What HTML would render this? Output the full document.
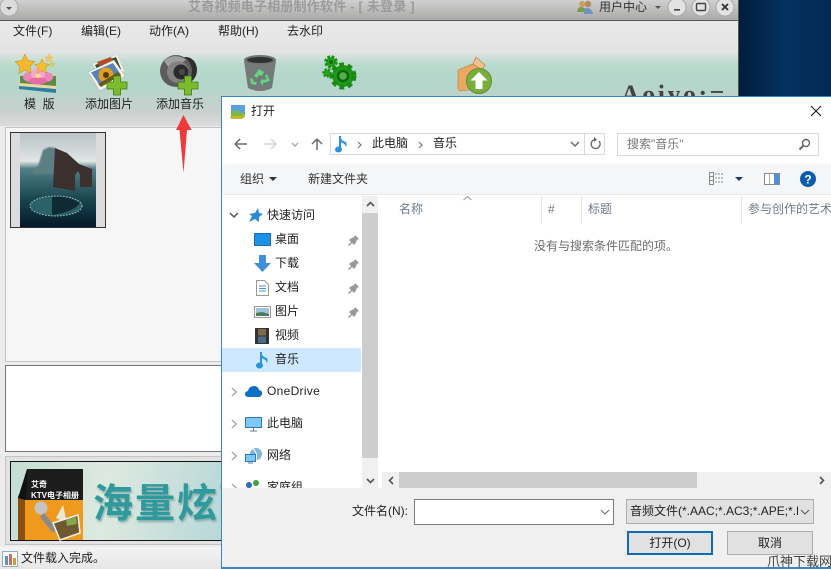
<!DOCTYPE html>
<html><head><meta charset="utf-8">
<style>
html,body{margin:0;padding:0}
body{width:831px;height:569px;position:relative;overflow:hidden;background:#03274f;font-family:"Liberation Sans","Noto Sans CJK SC",sans-serif;font-size:12px;color:#222}
.a{position:absolute;white-space:nowrap}
svg{position:absolute;overflow:visible}
</style></head><body>
<div class="a" style="left:739px;top:0;width:92px;height:97px;background:linear-gradient(90deg,#021d3e,#04315f 50%,#032a55)"></div>
<!-- app window -->
<div class="a" style="left:0;top:0;width:738px;height:569px;background:#ececec"></div>
<div class="a" style="left:738px;top:0;width:1px;height:97px;background:#555"></div>
<div class="a" style="left:0;top:0;width:738px;height:20px;background:linear-gradient(#d0d0d0,#a9a9a7)"></div>
<div class="a" style="left:0;top:20px;width:738px;height:1px;background:#555"></div>
<div class="a" style="left:0;top:21px;width:738px;height:105px;background:linear-gradient(#e9e9e9 0,#e4e4e4 30px,#b8dacd 44px,#b4d6ca 64px,#c8d0cc 90px,#dcdcdc 105px)"></div>
<div class="a" style="left:188px;top:-3px;font-size:13px;font-weight:bold;color:#9b9b9b;line-height:20px;letter-spacing:.2px">艾奇视频电子相册制作软件 - [ 未登录 ]</div>
<svg style="left:0;top:0" width="20" height="20"><circle cx="9" cy="7" r="9" fill="#dcdcdc" stroke="#aaa"/><path d="M6 7h6l-3 3z" fill="#555"/></svg>
<svg style="left:577px;top:0" width="18" height="14"><circle cx="5" cy="4" r="3" fill="#c9a15c"/><path d="M0 12q1-6 5-5t5 5z" fill="#7a9a50"/><circle cx="11" cy="4" r="3.200" fill="#b98a5a"/><path d="M7 14q0-7 4-6t5 6z" fill="#6d93c9"/></svg>
<div class="a" style="left:599px;top:-1px;font-size:12px;line-height:16px;color:#333">用户中心</div>
<svg style="left:654px;top:5px" width="8" height="5"><path d="M1 1h6l-3 3z" fill="#555"/></svg>
<svg style="left:667px;top:0" width="71" height="18">
<circle cx="10" cy="7" r="9" fill="#e2e2e2" stroke="#aaa"/><rect x="7" y="9" width="6" height="1.600" fill="#444"/>
<circle cx="34" cy="7" r="9" fill="#e2e2e2" stroke="#aaa"/><rect x="29.500" y="3.500" width="9" height="7" rx="1" fill="none" stroke="#444" stroke-width="1.400"/>
<circle cx="58" cy="7" r="9" fill="#e2e2e2" stroke="#aaa"/><path d="M55 4l6 6M61 4l-6 6" stroke="#333" stroke-width="1.800"/></svg>
<div class="a" style="left:13px;top:23px;line-height:17px">文件(F)</div>
<div class="a" style="left:81px;top:23px;line-height:17px">编辑(E)</div>
<div class="a" style="left:149px;top:23px;line-height:17px">动作(A)</div>
<div class="a" style="left:218px;top:23px;line-height:17px">帮助(H)</div>
<div class="a" style="left:287px;top:23px;line-height:17px">去水印</div>
<!-- toolbar icons -->
<svg style="left:16px;top:52px" width="42" height="44">
<path d="M3 32l37 5v4L3 37z" fill="#2f7fa0"/><path d="M3 28l37 3v6l-37-3z" fill="#e8d9a0"/><path d="M4 24h36v10L4 31z" fill="#5f8a45"/>
<ellipse cx="14" cy="25" rx="7" ry="5" fill="#ef86b8"/><ellipse cx="30" cy="25" rx="7" ry="5" fill="#ef86b8"/><ellipse cx="22" cy="22" rx="7" ry="6" fill="#f7a6cc"/><ellipse cx="22" cy="29" rx="9" ry="3.500" fill="#e86aa8"/><ellipse cx="22" cy="24" rx="3" ry="2" fill="#f7e27a"/>
<path d="M9 2l3 6.500 7 1-5 5 1.200 7L9 18l-6.200 3.500 1.200-7-5-5 7-1z" fill="#f3b82e" stroke="#c98a10" stroke-width=".5"/>
<path d="M26 7l2.200 4.600 5 .8-3.600 3.500.8 5L26 18.500 21.600 21l.8-5-3.600-3.500 5-.8z" fill="#f2bf36" stroke="#c98a10" stroke-width=".5"/>
<path d="M33 1l1.600 3.300 3.600.5-2.600 2.500.6 3.600L33 9.200l-3.200 1.700.6-3.600-2.600-2.500 3.600-.5z" fill="#e6c873"/>
<path d="M36 9l1 2 2.300.3-1.700 1.600.4 2.300L36 14.100l-2 1.100.4-2.300-1.700-1.600 2.300-.3z" fill="#d9c765"/></svg>
<svg style="left:87px;top:54px" width="42" height="40">
<path d="M6 10L30 1l7 16-23 9z" fill="#f2f2ea"/><path d="M8 11L29 3l5 12-20 8z" fill="#3a4a2a"/><path d="M10 8l14-5 2 4-14 5z" fill="#b84a2a"/>
<path d="M1 18L27 6l11 16-25 15z" fill="#f6f6ef" stroke="#aaa" stroke-width=".5"/><path d="M4 18.500L26 9l8 12-20 12z" fill="#5a82b8"/><circle cx="19" cy="21" r="7.500" fill="#e0a01e"/><circle cx="19" cy="21" r="3" fill="#5a3a10"/><path d="M11 30l20-12 3 3-20 12z" fill="#6a5a20"/>
<path d="M26.500 22h7v6h6.500v7h-6.500v6h-7v-6H20v-7h6.500z" fill="#7dbb2c" stroke="#3d7a14" stroke-width=".8"/></svg>
<svg style="left:158px;top:53px" width="42" height="42">
<ellipse cx="28" cy="17" rx="11" ry="13" fill="#2e2e2e"/><circle cx="18" cy="18" r="16" fill="#5c5c5c"/><path d="M6 8a16 16 0 0 1 22-1L20 12a8 8 0 0 0-9 3z" fill="#a0a0a0"/><circle cx="20" cy="19" r="11" fill="#828282"/><circle cx="23" cy="19" r="7.500" fill="#2a2a2a"/><circle cx="24" cy="19" r="3" fill="#4a4a4a"/>
<path d="M26.500 23h7v6h6.500v7h-6.500v6h-7v-6H20v-7h6.500z" fill="#7dbb2c" stroke="#3d7a14" stroke-width=".8"/></svg>
<svg style="left:243px;top:55px" width="34" height="38">
<ellipse cx="17" cy="5" rx="16" ry="5" fill="#6f7472"/><path d="M1 6l4 27q12 6 24 0l4-27q-16 7-32 0z" fill="#74797a"/><ellipse cx="17" cy="5" rx="13" ry="3" fill="#2f3233"/>
<path d="M11 21l5-7 5 3-2 4-3-1-2 3zM24 19l3 7-7 2v3l-3-4 3-4v2l4-1-2-3zM13 30l-5-1-1-5 2-1 2 4 3 0z" fill="#63d581"/></svg>
<svg style="left:322px;top:55px" width="40" height="38">
<circle cx="9" cy="7" r="5" fill="#2aa51c" stroke="#149014" stroke-dasharray="2.500 1.500" stroke-width="3.500"/><circle cx="9" cy="7" r="2.200" fill="#0d730d"/>
<circle cx="5" cy="18" r="3.500" fill="#2aa51c" stroke="#149014" stroke-dasharray="2 1.500" stroke-width="2.500"/>
<circle cx="21" cy="21" r="11" fill="#1e9a18" stroke="#1a8a16" stroke-dasharray="4.500 3.500" stroke-width="5"/><circle cx="21" cy="21" r="5" fill="#58ad4c" stroke="#0b6a0b" stroke-width="2.500"/></svg>
<svg style="left:457px;top:56px" width="38" height="38">
<path d="M1 14l15-6 5 3v22l-18 2q-2-1-2-3z" fill="#eaa862" stroke="#b57a3a" stroke-width=".6"/><path d="M16 8l3-7 9 8-3 5z" fill="#f2c08a" stroke="#b57a3a" stroke-width=".6"/>
<circle cx="22" cy="25" r="12.500" fill="#7aae3c" stroke="#5f8f30"/><path d="M22 16l8.500 8.500H25.500V33h-7v-8.500h-5z" fill="#fff"/></svg>
<div class="a" style="left:24px;top:97px;line-height:15px">模&nbsp;&nbsp;版</div>
<div class="a" style="left:85px;top:97px;line-height:15px">添加图片</div>
<div class="a" style="left:156px;top:97px;line-height:15px">添加音乐</div>
<div class="a" style="left:621px;top:80px;font-family:'Liberation Serif',serif;font-size:26px;font-weight:bold;line-height:30px;color:#444;letter-spacing:2.500px">Aoiyo:=</div>
<!-- panels -->
<div class="a" style="left:5px;top:127px;width:225px;height:235px;background:#f6f6f7;border:1px solid #c4c4c4;box-sizing:border-box"></div>
<div class="a" style="left:10px;top:132px;width:96px;height:96px;background:#dcdcdf;border:1px solid #333;box-sizing:border-box"></div>
<svg style="left:20px;top:133px;overflow:hidden" width="76" height="94" viewBox="0 0 76 94">
<defs><linearGradient id="g" x1="0" y1="0" x2="0" y2="1"><stop offset="0" stop-color="#b9c2c6"/><stop offset=".3" stop-color="#e1e6e6"/><stop offset=".38" stop-color="#4f7f86"/><stop offset=".7" stop-color="#1a4650"/><stop offset="1" stop-color="#05182a"/></linearGradient><filter id="b"><feGaussianBlur stdDeviation=".7"/></filter></defs>
<rect width="76" height="94" fill="url(#g)"/>
<path d="M11 37l7-4 5-16 6-3 7 1v26H14z" fill="#5d7f82" filter="url(#b)"/>
<path d="M35 15l12 5 12 11 13 5v18H60V42l-2-4-3 4v16l-22-4z" fill="#3b302d"/>
<ellipse cx="36" cy="73" rx="26" ry="10" fill="#2b6169" stroke="#a7c2c5" stroke-dasharray="1.500 1.500"/><path d="M32 64q16-2 28 6-6 9-28 12z" fill="#0f2a33"/></svg>
<!-- arrow -->
<svg style="left:176px;top:115px" width="16" height="60"><path d="M7.500 0L15.500 15H11L7.500 58 3.500 15H0z" fill="#f03a3a"/></svg>
<div class="a" style="left:5px;top:365px;width:225px;height:87px;background:#fff;border:1px solid #777;box-sizing:border-box"></div>
<div class="a" style="left:5px;top:456px;width:225px;height:89px;background:#e2e2e2;border:1px solid #c4c4c4;box-sizing:border-box"></div>
<div class="a" style="left:10px;top:461px;width:212px;height:80px;background:linear-gradient(100deg,#c4ddd2,#dde9e0 45%,#b8d8d8);border:1px solid #111;box-sizing:border-box;overflow:hidden">
<div class="a" style="left:82px;top:14px;font-size:40px;line-height:56px;font-weight:bold;color:#2f9a9c;letter-spacing:2px;text-shadow:1px 2px 2px #8aa">海量炫酷</div></div>
<svg style="left:18px;top:466px" width="66" height="74">
<path d="M9 3h56v34H0z" fill="#1c1c1c"/><path d="M7 34h58v40H7z" fill="#ef9a1f"/><path d="M0 30l7-10v54H0z" fill="#8a4f10"/><path d="M0 32L9 3v20L7 34z" fill="#111"/>
<path d="M38 52l7-13 4 18z" fill="#e9e9d8"/>
<circle cx="23" cy="42" r="6.500" fill="#c4c4c4"/><path d="M26 47l13 16-4 4-13-16z" fill="#8a8a8a"/><path d="M35 57l25-8 2 18-20 7z" fill="#6f5a30" stroke="#f2f2f2" stroke-width="1.500"/><path d="M48 54l10-3 1 7-10 2z" fill="#86a84a"/></svg>
<div class="a" style="left:31px;top:479px;font-size:8px;line-height:11px;font-weight:bold;color:#fff">艾奇<br>KTV电子相册</div>
<div class="a" style="left:0;top:547px;width:221px;height:22px;background:linear-gradient(#f4f4f4,#e6e6e6)"></div>
<svg style="left:2px;top:551px" width="16" height="16"><rect x=".5" y=".5" width="15" height="15" fill="#fff" stroke="#9ab"/><rect x="3" y="5" width="3" height="9" fill="#5a8fd0"/><rect x="7" y="3" width="3" height="11" fill="#d06a5a"/><rect x="11" y="7" width="3" height="7" fill="#c9a040"/></svg>
<div class="a" style="left:21px;top:550px;font-size:12px;line-height:17px">文件载入完成。</div>
<!-- dialog -->
<div class="a" style="left:221px;top:96px;width:610px;height:473px;background:#fff;border:1px solid #3a86c4;border-right:0;box-sizing:border-box"></div>
<svg style="left:230px;top:104px" width="16" height="16"><rect x="1" y="1" width="14" height="11" fill="#5aa0dc"/><path d="M1 8l5-2 9 4v2H1z" fill="#7fb84a"/><path d="M0 12h12l3-2v3l-3 2H1z" fill="#c9b52e"/></svg>
<div class="a" style="left:251px;top:103px;line-height:17px;color:#222">打开</div>
<svg style="left:810px;top:105px" width="12" height="12"><path d="M1 1l10 10M11 1L1 11" stroke="#111" stroke-width="1"/></svg>
<!-- nav -->
<svg style="left:234px;top:137px" width="100" height="14"><path d="M1 7h12M1 7l5-5M1 7l5 5" stroke="#6b6b6b" stroke-width="1.500" fill="none"/><path d="M30 7h12M42 7l-5-5M42 7l-5 5" stroke="#d5d5d5" stroke-width="1.500" fill="none"/><path d="M58 6l3 3 3-3" stroke="#999" stroke-width="1.200" fill="none"/><path d="M83 13V2M83 2l-5 5M83 2l5 5" stroke="#6b6b6b" stroke-width="1.500" fill="none"/></svg>
<div class="a" style="left:330px;top:133px;width:275px;height:22px;border:1px solid #d9d9d9;box-sizing:border-box"></div>
<div class="a" style="left:584px;top:133px;width:1px;height:22px;background:#d9d9d9"></div>
<svg style="left:335px;top:135px" width="14" height="19"><path d="M5 1v13" stroke="#2a93dc" stroke-width="2"/><ellipse cx="3.500" cy="14.500" rx="3.500" ry="3" fill="#2a93dc"/><path d="M5 1q1 5 6 6 1 2 0 5-1-4-6-5z" fill="#2a93dc"/></svg>
<svg style="left:357px;top:141px" width="5" height="8"><path d="M1 1l3 3-3 3" stroke="#777" fill="none" stroke-width="1.200"/></svg>
<div class="a" style="left:372px;top:135px;line-height:17px;color:#222">此电脑</div>
<svg style="left:418px;top:141px" width="5" height="8"><path d="M1 1l3 3-3 3" stroke="#777" fill="none" stroke-width="1.200"/></svg>
<div class="a" style="left:433px;top:135px;line-height:17px;color:#222">音乐</div>
<svg style="left:570px;top:141px" width="10" height="7"><path d="M1 1l4 4 4-4" stroke="#666" fill="none" stroke-width="1.400"/></svg>
<svg style="left:589px;top:137px" width="13" height="14"><path d="M10 4a4.500 4.500 0 1 1-3-1.500" stroke="#666" fill="none" stroke-width="1.300"/><path d="M5 0l3 2.500-3 2.500z" fill="#666"/></svg>
<div class="a" style="left:617px;top:133px;width:202px;height:23px;border:1px solid #d9d9d9;box-sizing:border-box"></div>
<div class="a" style="left:627px;top:136px;line-height:17px;color:#777">搜索"音乐"</div>
<svg style="left:798px;top:138px" width="13" height="13"><circle cx="8" cy="5" r="3.500" stroke="#666" stroke-width="1.400" fill="none"/><path d="M5.500 7.500L1.500 11.500" stroke="#666" stroke-width="2"/></svg>
<!-- command bar -->
<div class="a" style="left:222px;top:164px;width:609px;height:31px;background:#f5f6f7;border-bottom:1px solid #ebebeb;box-sizing:border-box"></div>
<div class="a" style="left:240px;top:171px;line-height:17px;color:#333">组织</div>
<svg style="left:269px;top:177px" width="9" height="5"><path d="M0 0h8l-4 4z" fill="#333"/></svg>
<div class="a" style="left:308px;top:171px;line-height:17px;color:#333">新建文件夹</div>
<svg style="left:709px;top:172px" width="16" height="13"><path d="M.5.5h4v12h-4zM.5 4.500h4M.5 8.500h4" stroke="#888" fill="none"/><path d="M6 2h9M6 6h9M6 10h9" stroke="#888" stroke-dasharray="2 1"/></svg>
<svg style="left:735px;top:177px" width="9" height="5"><path d="M0 0h8l-4 4z" fill="#1f3a5c"/></svg>
<svg style="left:764px;top:173px" width="16" height="12"><rect x=".5" y=".5" width="15" height="11" fill="#fff" stroke="#888"/><rect x="10" y="1" width="5" height="10" fill="#4a90d9"/><path d="M5.500 1v10" stroke="#aaa"/></svg>
<svg style="left:800px;top:171px" width="16" height="16"><circle cx="8" cy="8" r="8" fill="#0b5cad"/><text x="8" y="12.500" text-anchor="middle" font-size="12" font-weight="bold" fill="#fff" font-family="Liberation Sans">?</text></svg>
<!-- column headers -->
<div class="a" style="left:399px;top:201px;line-height:17px;color:#6d7b8c">名称</div>
<svg style="left:463px;top:196px" width="9" height="5"><path d="M.5 4L4.500.5 8.500 4" stroke="#999" fill="none"/></svg>
<div class="a" style="left:541px;top:196px;width:1px;height:28px;background:#e5e5e5"></div>
<div class="a" style="left:548px;top:201px;line-height:17px;color:#6d7b8c">#</div>
<div class="a" style="left:581px;top:196px;width:1px;height:28px;background:#e5e5e5"></div>
<div class="a" style="left:588px;top:201px;line-height:17px;color:#6d7b8c">标题</div>
<div class="a" style="left:741px;top:196px;width:1px;height:28px;background:#e5e5e5"></div>
<div class="a" style="left:748px;top:201px;line-height:17px;color:#6d7b8c">参与创作的艺术家</div>
<div class="a" style="left:534px;top:238px;line-height:17px;color:#6d6d6d">没有与搜索条件匹配的项。</div>
<!-- nav tree -->
<svg style="left:229px;top:212px" width="10" height="7"><path d="M1 1l4 4 4-4" stroke="#555" fill="none" stroke-width="1.500"/></svg>
<svg style="left:248px;top:208px" width="15" height="15"><path d="M10 0l1 5 4 1-4 3 0 5-4-3-6 3 3-6-3-2 6-1z" fill="#2a8ad4"/></svg>
<div class="a" style="left:267px;top:207px;line-height:17px;color:#222">快速访问</div>
<div class="a" style="left:254px;top:233px;width:17px;height:13px;background:#1e90e6;border:1px solid #1a6eb0;box-sizing:border-box"></div>
<div class="a" style="left:275px;top:231px;line-height:17px;color:#222">桌面</div>
<svg style="left:254px;top:255px" width="17" height="17"><path d="M5 0h7v8h5l-8.500 9L0 8h5z" fill="#3f8fdc"/></svg>
<div class="a" style="left:275px;top:255px;line-height:17px;color:#222">下载</div>
<svg style="left:256px;top:280px" width="13" height="16"><path d="M.5.5h8l4 4v11H.5z" fill="#fff" stroke="#999"/><path d="M3 6h7M3 8.500h7M3 11h7" stroke="#4a90d9"/></svg>
<div class="a" style="left:275px;top:279px;line-height:17px;color:#222">文档</div>
<svg style="left:254px;top:306px" width="17" height="12"><rect x=".5" y=".5" width="16" height="11" fill="#fff" stroke="#999"/><rect x="2" y="2" width="13" height="8" fill="#9fc3d8"/><path d="M2 7l6-1 7 2v2H2z" fill="#4f7a5a"/></svg>
<div class="a" style="left:275px;top:303px;line-height:17px;color:#222">图片</div>
<svg style="left:255px;top:328px" width="14" height="16"><rect width="14" height="16" fill="#333"/><rect x="3" y="1" width="8" height="6.500" fill="#7c6a4a"/><rect x="3" y="8.500" width="8" height="6.500" fill="#4a6a8a"/></svg>
<div class="a" style="left:275px;top:327px;line-height:17px;color:#222">视频</div>
<div class="a" style="left:222px;top:348px;width:139px;height:24px;background:#cde8ff"></div>
<svg style="left:256px;top:351px" width="13" height="19"><path d="M5 1v13" stroke="#2a93dc" stroke-width="2"/><ellipse cx="3.500" cy="14.500" rx="3.500" ry="3" fill="#2a93dc"/><path d="M5 1q1 5 6 6 1 2 0 5-1-4-6-5z" fill="#2a93dc"/></svg>
<div class="a" style="left:275px;top:351px;line-height:17px;color:#222">音乐</div>
<svg style="left:347px;top:235px" width="12" height="90" fill="#999"><path d="M8 0l4 4-2 1-2 4-1 1-2-2-3 3-1-1 3-3-2-2 1-1 4-2z"/><path transform="translate(0,24)" d="M8 0l4 4-2 1-2 4-1 1-2-2-3 3-1-1 3-3-2-2 1-1 4-2z"/><path transform="translate(0,48)" d="M8 0l4 4-2 1-2 4-1 1-2-2-3 3-1-1 3-3-2-2 1-1 4-2z"/><path transform="translate(0,72)" d="M8 0l4 4-2 1-2 4-1 1-2-2-3 3-1-1 3-3-2-2 1-1 4-2z"/></svg>
<svg style="left:231px;top:387px" width="6" height="76"><path d="M1 1l4 4-4 4M1 33l4 4-4 4M1 65l4 4-4 4" stroke="#aaa" fill="none" stroke-width="1.500"/></svg>
<svg style="left:245px;top:385px" width="18" height="12"><path d="M3 12a3 3 0 0 1 0-6q1-5 6-5 4 0 5 4 4 1 3 4-1 3-3 3z" fill="#0f6fc6"/></svg>
<div class="a" style="left:267px;top:383px;line-height:17px;color:#222;letter-spacing:.3px">OneDrive</div>
<svg style="left:245px;top:417px" width="17" height="15"><rect x=".5" y=".5" width="16" height="10" fill="#7fc8f5" stroke="#2a7ab8"/><path d="M5 14h7M8.500 11v3" stroke="#678"/></svg>
<div class="a" style="left:267px;top:415px;line-height:17px;color:#222">此电脑</div>
<svg style="left:245px;top:448px" width="18" height="16"><circle cx="11" cy="6" r="6" fill="#7fb5e0"/><path d="M8 1q5 4 3 11" stroke="#fff" fill="none"/><rect x=".5" y="6.500" width="10" height="7" fill="#7fc8f5" stroke="#2a7ab8"/><path d="M3 15h5" stroke="#678"/></svg>
<div class="a" style="left:267px;top:447px;line-height:17px;color:#222">网络</div>
<div class="a" style="left:222px;top:472px;width:140px;height:16px;overflow:hidden">
<svg style="left:23px;top:8px" width="16" height="10"><circle cx="4" cy="5" r="3" fill="#2a6ab8"/><circle cx="11" cy="3" r="3" fill="#3fa03f"/></svg>
<svg style="left:9px;top:11px" width="6" height="9"><path d="M1 1l4 4-4 4" stroke="#aaa" fill="none" stroke-width="1.500"/></svg>
<div class="a" style="left:45px;top:7px;line-height:17px;color:#222">家庭组</div></div>
<!-- nav scrollbar -->
<div class="a" style="left:362px;top:196px;width:16px;height:292px;background:#f0f0f0"></div>
<div class="a" style="left:362px;top:213px;width:16px;height:245px;background:#cdcdcd"></div>
<svg style="left:366px;top:201px" width="9" height="6"><path d="M1 5l3.500-3.500L8 5" stroke="#555" fill="none" stroke-width="1.600"/></svg>
<svg style="left:366px;top:478px" width="9" height="6"><path d="M1 1l3.500 3.500L8 1" stroke="#555" fill="none" stroke-width="1.600"/></svg>
<!-- h scrollbar -->
<div class="a" style="left:382px;top:472px;width:449px;height:16px;background:#f0f0f0"></div>
<div class="a" style="left:399px;top:472px;width:298px;height:16px;background:#cdcdcd"></div>
<svg style="left:388px;top:476px" width="6" height="9"><path d="M5 1L1.500 4.500 5 8" stroke="#555" fill="none" stroke-width="1.600"/></svg>
<svg style="left:819px;top:476px" width="6" height="9"><path d="M1 1l3.500 3.500L1 8" stroke="#555" fill="none" stroke-width="1.600"/></svg>
<!-- bottom -->
<div class="a" style="left:222px;top:488px;width:609px;height:79px;background:#f0f0f0"></div>
<div class="a" style="left:221px;top:567px;width:610px;height:2px;background:#3a86c4"></div>
<div class="a" style="left:352px;top:503px;line-height:17px;color:#222">文件名(N):</div>
<div class="a" style="left:414px;top:499px;width:200px;height:26px;background:#fff;border:1px solid #7a7a7a;box-sizing:border-box"></div>
<svg style="left:600px;top:509px" width="10" height="6"><path d="M1 1l4 4 4-4" stroke="#666" fill="none"/></svg>
<div class="a" style="left:626px;top:499px;width:188px;height:25px;background:#e1e1e1;border:1px solid #adadad;box-sizing:border-box"></div>
<div class="a" style="left:630px;top:503px;width:168px;overflow:hidden;line-height:17px;color:#222">音频文件(*.AAC;*.AC3;*.APE;*.FLAC</div>
<svg style="left:800px;top:509px" width="10" height="6"><path d="M1 1l4 4 4-4" stroke="#555" fill="none"/></svg>
<div class="a" style="left:627px;top:531px;width:86px;height:24px;background:#e1e1e1;border:2px solid #0e6cb3;box-sizing:border-box;text-align:center;line-height:20px;color:#222">打开(O)</div>
<div class="a" style="left:727px;top:531px;width:86px;height:24px;background:#e1e1e1;border:1px solid #adadad;box-sizing:border-box;text-align:center;line-height:22px;color:#222">取消</div>
<div class="a" style="left:767px;top:554px;font-size:13px;line-height:15px;color:#444">爪神下载网</div>
</body></html>
